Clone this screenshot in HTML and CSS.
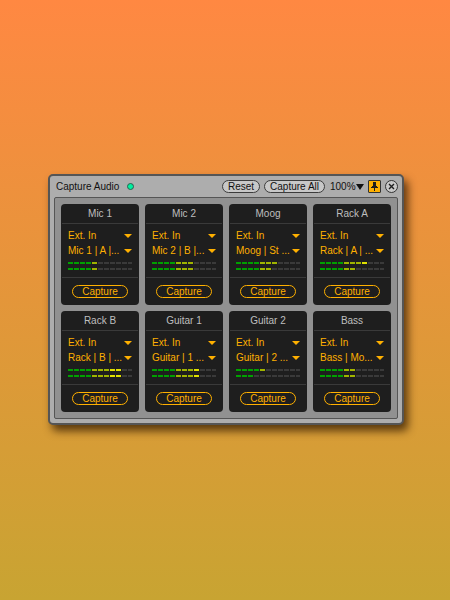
FILE: index.html
```
<!DOCTYPE html>
<html lang="en">
<head>
    <meta charset="utf-8">
    <meta name="viewport" content="width=device-width, initial-scale=1">
    <title>Capture Audio</title>
    <link rel="stylesheet" href="styles.css">
</head>
<body>
    <main class="window">
        <header class="titlebar">
            <h1>Capture Audio</h1>
            <span class="status"></span>
            <div class="tools">
                <button class="pill">Reset</button>
                <button class="pill">Capture All</button>
                <select class="zoom" aria-label="Zoom">
                    <option>100%</option>
                </select>
                <button class="pin" aria-label="Keep on top">
                    <svg width="11" height="11" viewBox="0 0 11 11" shape-rendering="crispEdges">
                        <path d="M4 1h3v4h1v1h1v1h-3v3h-1v-3h-3v-1h1v-1h1z" fill="#1e1e1e"/>
                    </svg>
                </button>
                <button class="close" aria-label="Close">
                    <svg width="11" height="11" viewBox="0 0 11 11">
                        <path d="M3 3l5 5M8 3l-5 5" stroke="#1e1e1e" stroke-width="1.4"/>
                    </svg>
                </button>
            </div>
        </header>
        <div class="channels" id="channels"></div>
    </main>

    <script>
        var channels = [
            { name: "Mic 1", input: "Mic 1 | A |...", left: 5, right: 5 },
            { name: "Mic 2", input: "Mic 2 | B |...", left: 7, right: 7 },
            { name: "Moog", input: "Moog | St ...", left: 7, right: 6 },
            { name: "Rack A", input: "Rack | A | ...", left: 8, right: 6 },
            { name: "Rack B", input: "Rack | B | ...", left: 9, right: 9 },
            { name: "Guitar 1", input: "Guitar | 1 ...", left: 8, right: 8 },
            { name: "Guitar 2", input: "Guitar | 2 ...", left: 5, right: 3 },
            { name: "Bass", input: "Bass | Mo...", left: 6, right: 6 }
        ];

        // each meter segment is 6px wide, gap included
        function meter(level) {
            return '<div class="meter"><div class="level" style="width: ' + level * 6 + 'px"></div></div>';
        }

        var html = "";
        channels.forEach(function (c) {
            html += '<section class="channel">' +
                '<h2>' + c.name + '</h2>' +
                '<div class="inputs">' +
                '<select aria-label="' + c.name + ' source"><option>Ext. In</option></select>' +
                '<select aria-label="' + c.name + ' input"><option>' + c.input + '</option></select>' +
                meter(c.left) + meter(c.right) +
                '</div>' +
                '<div class="action"><button>Capture</button></div>' +
                '</section>';
        });
        document.getElementById("channels").innerHTML = html;
    </script>
</body>
</html>
```
FILE: styles.css
```
* {
    box-sizing: border-box;
}

body {
    margin: 0;
    min-height: 100vh;
    padding: 0 46px 1px 48px;
    display: flex;
    align-items: center;
    justify-content: center;
    background: linear-gradient(#ff8842, #c8a432);
    font-family: "Liberation Sans", Arial, sans-serif;
    font-size: 10px;
    line-height: 15px;
}

h1, h2 {
    margin: 0;
    font-size: 10px;
    font-weight: 400;
}

button, select {
    margin: 0;
    padding: 0;
    font: inherit;
    appearance: none;
    background: none;
    cursor: pointer;
}

.window {
    width: 100%;
    max-width: 600px;
    padding: 0 4px 4px;
    border: 2px solid #555;
    border-radius: 5px;
    background-color: #adadad;
    box-shadow: 4px 6px 8px rgba(50, 25, 0, 0.75);
}

.titlebar {
    display: flex;
    align-items: center;
    height: 21px;
    padding-left: 2px;
    color: #111;
}

.status {
    width: 7px;
    height: 7px;
    margin-left: 8px;
    border: 1px solid #2b5f4d;
    border-radius: 50%;
    background-color: #00f0a0;
}

.tools {
    display: flex;
    align-items: center;
    gap: 4px;
    margin-left: auto;
}

.pill {
    height: 13px;
    padding: 0 5px;
    border: 1px solid #3c3c3c;
    border-radius: 7px;
    background-color: #c8c8c8;
    color: #111;
    line-height: 11px;
}

.zoom {
    width: 34px;
    height: 15px;
    margin-left: 1px;
    border: 0;
    color: #111;
    background: url("data:image/svg+xml,%3Csvg xmlns='http://www.w3.org/2000/svg' width='8' height='6'%3E%3Cpath d='M0 0h8l-4 6z' fill='%23111'/%3E%3C/svg%3E") no-repeat right center;
}

.pin, .close {
    display: flex;
    width: 13px;
    height: 13px;
    border: 1px solid #333;
}

.pin {
    background-color: #ffb000;
    border-radius: 1px;
}

.close {
    border-radius: 50%;
    background-color: #c8c8c8;
}

.channels {
    display: grid;
    grid-template-columns: repeat(4, 1fr);
    gap: 6px;
    padding: 6px;
    border: 1px solid #555;
    border-radius: 2px;
    background-color: #919191;
}

.channel {
    padding: 0 1px;
    border-radius: 4px;
    background-color: #1e1e1e;
}

.channel h2 {
    height: 20px;
    border-bottom: 1px solid #3a3a3a;
    color: #bebebe;
    line-height: 19px;
    text-align: center;
}

.inputs {
    height: 53px;
    padding: 4px 6px 0;
}

.inputs select {
    display: block;
    width: 100%;
    height: 15px;
    border: 0;
    color: #ffb000;
    background: url("data:image/svg+xml,%3Csvg xmlns='http://www.w3.org/2000/svg' width='8' height='4'%3E%3Cpath d='M0 0h8l-4 4z' fill='%23ffb000'/%3E%3C/svg%3E") no-repeat right center;
}

.meter {
    height: 2px;
    margin-top: 4px;
    background: repeating-linear-gradient(90deg, #3a3a3a 0 5px, transparent 5px 6px);
}

.level {
    height: 2px;
    background:
        repeating-linear-gradient(90deg, transparent 0 5px, #1e1e1e 5px 6px),
        linear-gradient(90deg, #00a000 24px, #a0b400 24px 42px, #e0e000 42px);
}

.action {
    display: flex;
    justify-content: center;
    padding: 7px 0;
    border-top: 1px solid #3a3a3a;
}

.action button {
    width: 56px;
    height: 13px;
    border: 1px solid #ffb000;
    border-radius: 7px;
    color: #ffb000;
    line-height: 11px;
}
```
